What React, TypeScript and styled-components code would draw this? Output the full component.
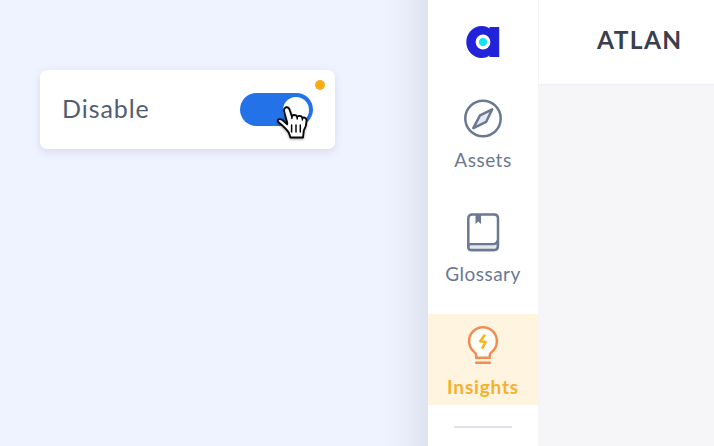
import React from "react";
import styled, { createGlobalStyle } from "styled-components";

const GlobalStyle = createGlobalStyle`
  * { box-sizing: border-box; }
  body { margin: 0; overflow: hidden; font-family: Lato, "Open Sans", sans-serif; }
`;

const Page = styled.div`
  display: flex;
  width: 714px;
  height: 446px;
  overflow: hidden;
  background: #eff2ff;
`;

const Preview = styled.section`
  flex: 0 0 428px;
  padding: 70px 0 0 40px;
  background: linear-gradient(to right, #eff2ff 385px, #e9ecf9 406px, #dfe3f1 428px);
`;

const Card = styled.div`
  position: relative;
  display: flex;
  align-items: center;
  justify-content: space-between;
  width: 295px;
  height: 79px;
  padding: 0 22px;
  border-radius: 7px;
  background: #fff;
  box-shadow: 0 3px 9px rgba(62, 70, 120, 0.13);
`;

const CardLabel = styled.span`
  font-size: 25px;
  line-height: 30px;
  letter-spacing: 0.95px;
  color: #525d73;
  margin-top: -4px;
`;

const StatusDot = styled.span`
  position: absolute;
  top: 10px;
  right: 10px;
  width: 10px;
  height: 10px;
  border-radius: 50%;
  background: #fbab15;
`;

const Toggle = styled.div`
  display: flex;
  justify-content: flex-end;
  align-items: center;
  width: 73px;
  height: 33px;
  padding-right: 4px;
  border-radius: 17px;
  background: #2372e8;
`;

const Knob = styled.span`
  width: 26px;
  height: 26px;
  border-radius: 50%;
  background: #fff;
`;

const Pointer = styled.svg`
  position: absolute;
  left: 232px;
  top: 30px;
  filter: drop-shadow(0 1px 1px rgba(0, 0, 0, 0.35));
`;

const Sidebar = styled.nav`
  display: flex;
  flex-direction: column;
  align-items: center;
  flex: 0 0 111px;
  background: #fff;
  border-right: 1px solid #f4f4f7;
`;

const LogoSlot = styled.div`
  display: flex;
  align-items: center;
  justify-content: center;
  height: 86.5px;
  padding-bottom: 3px;
`;

const NavList = styled.div`
  display: flex;
  flex-direction: column;
  gap: 22px;
  width: 100%;
`;

const NavItem = styled.div<{ $active?: boolean }>`
  display: flex;
  flex-direction: column;
  align-items: center;
  height: 91.5px;
  padding-top: 11.5px;
  color: ${(p) => (p.$active ? "#f6b02c" : "#6b7893")};
  background: ${(p) => (p.$active ? "#fff4df" : "transparent")};
  font-weight: ${(p) => (p.$active ? 700 : 400)};
`;

const NavLabel = styled.span<{ $spacing: string }>`
  margin-top: 9px;
  font-size: 19px;
  line-height: 23px;
  letter-spacing: ${(p) => p.$spacing};
`;

const Divider = styled.hr`
  width: 58px;
  height: 2px;
  margin: 20.5px 0 0;
  border: 0;
  background: #e1e2ea;
`;

const Workspace = styled.main`
  flex: 1;
  background: #f6f6f8;
`;

const Header = styled.header`
  height: 84px;
  padding: 25px 0 0 58px;
  background: #fff;
  box-shadow: 0 1px 1px #f1f1f3;
`;

const Title = styled.h1`
  margin: 0;
  font-size: 24.5px;
  line-height: 30px;
  font-weight: 700;
  letter-spacing: 1.4px;
  color: #3a3f50;
`;

const Logo = () => (
  <svg width="34" height="34" viewBox="0 0 34 34">
    <ellipse cx="15.600" cy="17" rx="15.300" ry="16" fill="#2023d9" />
    <path d="M23.500 2H33.200V32H23.500Z" fill="#2023d9" />
    <circle cx="17" cy="17" r="7.400" fill="#fff" />
    <circle cx="17" cy="17" r="4" fill="#12e1f7" />
  </svg>
);

const CompassIcon = () => (
  <svg width="40" height="41" viewBox="0 0 40 41" stroke="#6b7893" strokeLinejoin="round">
    <circle cx="20" cy="20.500" r="17.700" fill="none" strokeWidth="2.500" />
    <path d="M29.200 11.300 L17 17.300 L10.300 30.200 L23.200 23.800 Z" fill="#e7e9f1" strokeWidth="2.500" />
  </svg>
);

const BookIcon = () => (
  <svg width="40" height="41" viewBox="0 0 40 41" fill="none" stroke="#6b7893" strokeWidth="2.500">
    <path d="M5.300 35V6.700Q5.300 2.500 9.300 2.500H31Q35 2.500 35 6.500V34Q35 38 31 38H8.500Q5.300 38 5.300 34.700" />
    <path d="M8 32.200H30.500Q33.700 32.200 34.700 28.500V34Q34.700 38 30.700 38H8Q5.500 38 5.500 35T8 32.200Z" fill="#e3e6ee" strokeWidth="2.300" />
    <path d="M12.500 3H18V12L15.200 9.400L12.500 12Z" fill="#6b7893" stroke="none" />
  </svg>
);

const BulbIcon = () => (
  <svg width="40" height="41" viewBox="0 0 40 41" fill="none" stroke="#f18d50" strokeLinejoin="round" strokeLinecap="round">
    <path d="M13.200 32.800V30Q13 28.700 11.200 26.900A13.900 13.900 0 1 1 28.800 26.900Q27 28.700 26.800 30V32.800Z" fill="#fffefb" strokeWidth="2.500" />
    <path d="M13.200 37.700H26.800" strokeWidth="2.500" />
    <path d="M22 9.700L17.200 16.300L22.700 17L19 23.600" stroke="#f8b31d" strokeWidth="2.500" strokeLinecap="butt" strokeLinejoin="round" />
  </svg>
);

const HandPointer = () => (
  <Pointer width="42" height="42" viewBox="0 0 42 42" stroke="#080808" strokeLinejoin="round" strokeLinecap="round">
    <path d="M15.200 22.500L12.400 12.500C11.500 9.200 12.700 7.500 14.300 7.200C16.100 7 17.200 8.200 17.800 10.300L19.900 16.500C20.600 14.500 24.200 14.400 25.200 17C26.600 15.200 29.500 15.600 30.400 18C32.400 16.800 34.700 18.200 34.500 21C34.500 25.500 33.300 28 31.800 30.500L31 37.500H18.500L16.800 32.600C14 28.700 10.500 25.500 6.600 22.300C4.300 19.800 7.300 18.200 10.200 19.800L15.200 24.300Z" fill="#fff" strokeWidth="1.900" />
    <path d="M19.900 16.500V18.400M25.200 17V19M30.400 18V20" fill="none" strokeWidth="1.500" />
    <path d="M19.600 25V32M24 25V32M28.300 25V32" fill="none" strokeWidth="1.500" />
  </Pointer>
);

export default function App() {
  return (
    <Page>
      <GlobalStyle />
      <Preview>
        <Card>
          <CardLabel>Disable</CardLabel>
          <Toggle><Knob /></Toggle>
          <StatusDot />
          <HandPointer />
        </Card>
      </Preview>
      <Sidebar>
        <LogoSlot><Logo /></LogoSlot>
        <NavList>
          <NavItem><CompassIcon /><NavLabel $spacing="0.5px">Assets</NavLabel></NavItem>
          <NavItem><BookIcon /><NavLabel $spacing="0.5px">Glossary</NavLabel></NavItem>
          <NavItem $active><BulbIcon /><NavLabel $spacing="0.8px">Insights</NavLabel></NavItem>
        </NavList>
        <Divider />
      </Sidebar>
      <Workspace>
        <Header><Title>ATLAN</Title></Header>
      </Workspace>
    </Page>
  );
}
